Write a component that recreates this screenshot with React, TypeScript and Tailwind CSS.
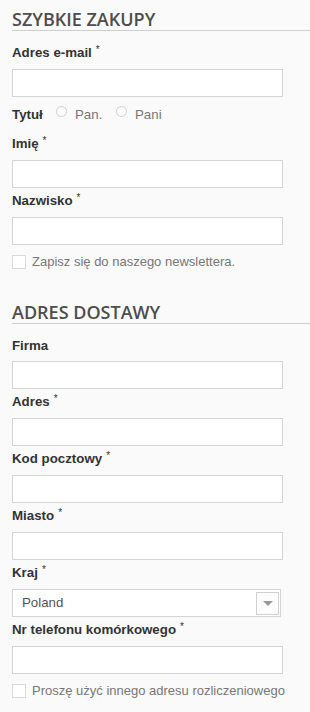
const arial = { fontFamily: '"Liberation Sans", Arial, sans-serif' };

const Heading = ({ children, className = '' }: { children: string; className?: string }) => (
  <h2
    className={`leading-[22px] text-[18px] font-semibold uppercase text-[#4d4d4d] border-b border-[#cfcfcf] ${className}`}
    style={{ fontFamily: '"Open Sans", sans-serif' }}
  >
    {children}
  </h2>
);

const Label = ({ text, req }: { text: string; req?: boolean }) => (
  <label className="block mt-[4px] mb-[6px] leading-[18px] text-[13.3px] font-bold text-[#333]">
    {text}
    {req && <span className="relative -top-[4px] ml-[4px] text-[10px] font-normal">*</span>}
  </label>
);

const Input = () => (
  <input type="text" className="block w-[271px] h-[28px] border border-[#d4d4d4] bg-white outline-none" />
);

const Field = ({ text, req }: { text: string; req?: boolean }) => (
  <div>
    <Label text={text} req={req} />
    <Input />
  </div>
);

const Check = ({ text }: { text: string }) => (
  <div className="flex items-start mt-[10px]">
    <span className="w-[14px] h-[14px] border border-[#d8d8d8] bg-white shrink-0" />
    <span className="ml-[6px] leading-[14px] text-[13px] text-[#777] whitespace-nowrap">{text}</span>
  </div>
);

const Radio = ({ text, w }: { text: string; w: string }) => (
  <span className="flex items-start">
    <span className="w-[11px] h-[11px] rounded-full border border-[#cfcfcf] bg-[#fdfdfd]" />
    <span className={`ml-[8px] leading-[18px] text-[13.3px] text-[#777] ${w}`}>{text}</span>
  </span>
);

export default function App() {
  return (
    <div className="w-[310px] h-[712px] bg-[#fafafa] pl-[12px] pt-[8px] overflow-hidden" style={arial}>
      <Heading>Szybkie zakupy</Heading>
      <div className="mt-[13px]">
        <Field text="Adres e-mail" req />
        <div className="flex items-start h-[34px] pt-[9px]">
          <span className="w-[44px] leading-[18px] text-[13.3px] font-bold text-[#333]">Tytuł</span>
          <Radio text="Pan." w="w-[41px]" />
          <Radio text="Pani" w="" />
        </div>
        <Field text="Imię" req />
        <Field text="Nazwisko" req />
        <Check text="Zapisz się do naszego newslettera." />
      </div>

      <Heading className="mt-[32px]">Adres dostawy</Heading>
      <div className="mt-[13px]">
        <Field text="Firma" />
        <Field text="Adres" req />
        <Field text="Kod pocztowy" req />
        <Field text="Miasto" req />
        <div>
          <Label text="Kraj" req />
          <div className="flex items-center w-[269px] h-[28px] border border-[#d4d4d4] bg-white">
            <span className="pl-[9px] text-[13.3px] text-[#555]">Poland</span>
            <span className="ml-auto mr-[1px] w-[23px] h-[23px] border border-[#d0d0d0] bg-[#fdfdfd] flex items-center justify-center">
              <span className="w-0 h-0 border-l-[5px] border-r-[5px] border-t-[5px] border-l-transparent border-r-transparent border-t-[#9a9a9a]" />
            </span>
          </div>
        </div>
        <Field text="Nr telefonu komórkowego" req />
        <Check text="Proszę użyć innego adresu rozliczeniowego" />
      </div>
    </div>
  );
}
